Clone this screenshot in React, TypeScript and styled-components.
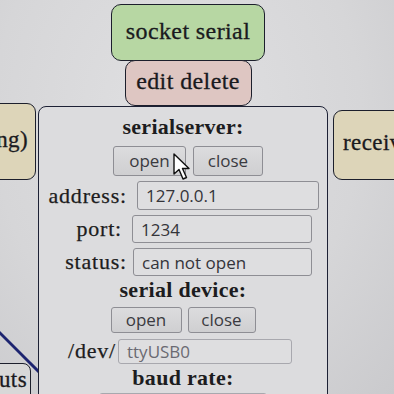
import * as React from 'react'
import styled, { createGlobalStyle } from 'styled-components'

const GlobalStyle = createGlobalStyle`
  html, body {
    margin: 0;
    padding: 0;
    background: #d8d8da;
  }
`

const serif = `'Liberation Serif', 'Times New Roman', serif`
const sans = `'Open Sans', 'DejaVu Sans', sans-serif`

export default function App() {
  return (
    <>
      <GlobalStyle />
      <Stage>
        <Heading>
          <NodeTitle>socket serial</NodeTitle>
          <NodeActions>edit delete</NodeActions>
        </Heading>
        <Wire viewBox="0 0 60 80">
          <line x1="-2" y1="0" x2="44" y2="46" stroke="#1d2470" strokeWidth="3" />
        </Wire>
        <SideNode side="left">ng)</SideNode>
        <SideNode side="right">receiv</SideNode>
        <OutNode>uts</OutNode>
        <Panel>
          <Section>serialserver:</Section>
          <ButtonRow offset={5}>
            <Button width={73}>open</Button>
            <Button width={70}>close</Button>
            <Cursor viewBox="0 0 18 28">
              <path
                d="M1 1 L1 21 L6 16.5 L10 26 L13.5 24.5 L9.5 15.5 L16 15.5 Z"
                fill="#fff"
                stroke="#111"
                strokeWidth="1.4"
                strokeLinejoin="round"
              />
            </Cursor>
          </ButtonRow>
          <Field labelWidth={88} gap={10}>
            <Label>address:</Label>
            <Input width={182} height={29}>127.0.0.1</Input>
          </Field>
          <Field labelWidth={83} gap={10}>
            <Label>port:</Label>
            <Input width={180}>1234</Input>
          </Field>
          <Field labelWidth={88} gap={6}>
            <Label>status:</Label>
            <Input width={179}>can not open</Input>
          </Field>
          <Section>serial device:</Section>
          <ButtonRow offset={0} small>
            <Button width={71} small>open</Button>
            <Button width={68} small>close</Button>
          </ButtonRow>
          <Field labelWidth={77} gap={2}>
            <Label>/dev/</Label>
            <Input width={174} height={25} faint>ttyUSB0</Input>
          </Field>
          <Section>baud rate:</Section>
          <Input width={168} height={25} faint />
        </Panel>
      </Stage>
    </>
  )
}

const Stage = styled.div`
  position: relative;
  width: 394px;
  height: 394px;
  overflow: hidden;
  background: radial-gradient(ellipse at 45% 30%, #e0e0e2 0%, #d6d6d8 60%, #cacacd 100%);
`

const Heading = styled.div`
  display: flex;
  flex-direction: column;
  align-items: center;
  padding-top: 4px;
  margin-left: -18px;
`

const NodeTitle = styled.div`
  width: 154px;
  height: 57px;
  box-sizing: border-box;
  display: flex;
  align-items: center;
  justify-content: center;
  padding-bottom: 2px;
  background: #b7d7a3;
  border: 1.5px solid #1c1f2c;
  border-radius: 10px;

  font-family: ${serif};
  font-size: 24px;
  letter-spacing: 0.4px;
  -webkit-text-stroke: 0.3px #1a1a1e;
  color: #1a1a1e;
`

const NodeActions = styled.div`
  width: 127px;
  height: 46px;
  box-sizing: border-box;
  display: flex;
  align-items: center;
  justify-content: center;
  margin-top: -1px;
  padding-bottom: 4px;
  background: #dec6c2;
  border: 1.5px solid #1c1f2c;
  border-radius: 10px;

  font-family: ${serif};
  font-size: 24px;
  letter-spacing: 0.4px;
  -webkit-text-stroke: 0.3px #1a1a1e;
  color: #1a1a1e;
`

const Panel = styled.div`
  position: absolute;
  left: 38px;
  top: 106px;
  width: 290px;
  height: 320px;
  box-sizing: border-box;
  display: flex;
  flex-direction: column;
  align-items: center;
  padding-top: 6px;
  background: #dcdcde;
  border: 1.5px solid #1d2135;
  border-radius: 8px;
`

const SideNode = styled.div<{ side: 'left' | 'right' }>`
  position: absolute;
  top: ${p => (p.side === 'left' ? 103 : 110)}px;
  left: ${p => (p.side === 'left' ? -60 : 333)}px;
  width: ${p => (p.side === 'left' ? 96 : 100)}px;
  height: ${p => (p.side === 'left' ? 77 : 70)}px;
  box-sizing: border-box;
  display: flex;
  align-items: center;
  justify-content: ${p => (p.side === 'left' ? 'flex-end' : 'flex-start')};
  padding: 0 ${p => (p.side === 'left' ? 7 : 0)}px 4px ${p => (p.side === 'left' ? 0 : 9)}px;
  background: #ddd5b9;
  border: 1.5px solid #1c1f2c;
  border-radius: 9px;

  font-family: ${serif};
  font-size: 23px;
  letter-spacing: 0.4px;
  -webkit-text-stroke: 0.3px #1a1a1e;
  color: #1a1a1e;
`

const OutNode = styled.div`
  position: absolute;
  left: -40px;
  top: 363px;
  width: 71px;
  height: 50px;
  box-sizing: border-box;
  padding: 3px 3px 0 0;
  text-align: right;
  background: #d8d8d8;
  border: 1.5px solid #1c1f2c;
  border-radius: 8px;

  font-family: ${serif};
  font-size: 23px;
  letter-spacing: 0.4px;
  -webkit-text-stroke: 0.3px #1a1a1e;
  color: #1a1a1e;
`

const Wire = styled.svg`
  position: absolute;
  left: 0;
  top: 331px;
  width: 60px;
  height: 80px;
  overflow: visible;
`

const Section = styled.div`
  margin-top: 1px;
  font-family: ${serif};
  font-weight: bold;
  font-size: 22px;
  letter-spacing: 0.3px;
  line-height: 26px;
  color: #1c1c20;
`

const ButtonRow = styled.div<{ offset: number; small?: boolean }>`
  position: relative;
  display: flex;
  gap: ${p => (p.small ? 6 : 7)}px;
  margin-top: ${p => (p.small ? 4 : 6)}px;
  margin-left: ${p => p.offset * 2}px;
`

const Button = styled.div<{ width: number; small?: boolean }>`
  width: ${p => p.width}px;
  height: ${p => (p.small ? 26 : 30)}px;
  box-sizing: border-box;
  display: flex;
  align-items: center;
  justify-content: center;
  padding-bottom: 1px;
  background: linear-gradient(#dcdcde, #cfcfd1);
  border: 1px solid #8e8e94;
  border-radius: 3px;

  font-family: ${sans};
  font-size: 17px;
  color: #3a3a40;
`

const Cursor = styled.svg`
  position: absolute;
  left: 60px;
  top: 7px;
  width: 18px;
  height: 28px;
`

const Field = styled.div<{ labelWidth: number; gap: number }>`
  align-self: stretch;
  display: grid;
  grid-template-columns: ${p => p.labelWidth}px auto;
  align-items: center;
  column-gap: ${p => p.gap}px;
  margin-top: 5px;
`

const Label = styled.span`
  text-align: right;
  font-family: ${serif};
  font-size: 22px;
  letter-spacing: 0.8px;
  -webkit-text-stroke: 0.25px #1c1c20;
  color: #1c1c20;
`

const Input = styled.div<{ width: number; height?: number; faint?: boolean }>`
  width: ${p => p.width}px;
  height: ${p => p.height ?? 28}px;
  box-sizing: border-box;
  display: flex;
  align-items: center;
  padding-left: 8px;
  margin-top: ${p => (p.faint && !p.children ? 2 : 0)}px;
  background: #dedee0;
  border: 1px solid ${p => (p.faint ? '#a8a8ae' : '#8e8e94')};
  border-radius: 3px;

  font-family: ${sans};
  font-size: 17px;
  color: ${p => (p.faint ? '#6a6a72' : '#34343a')};
`
